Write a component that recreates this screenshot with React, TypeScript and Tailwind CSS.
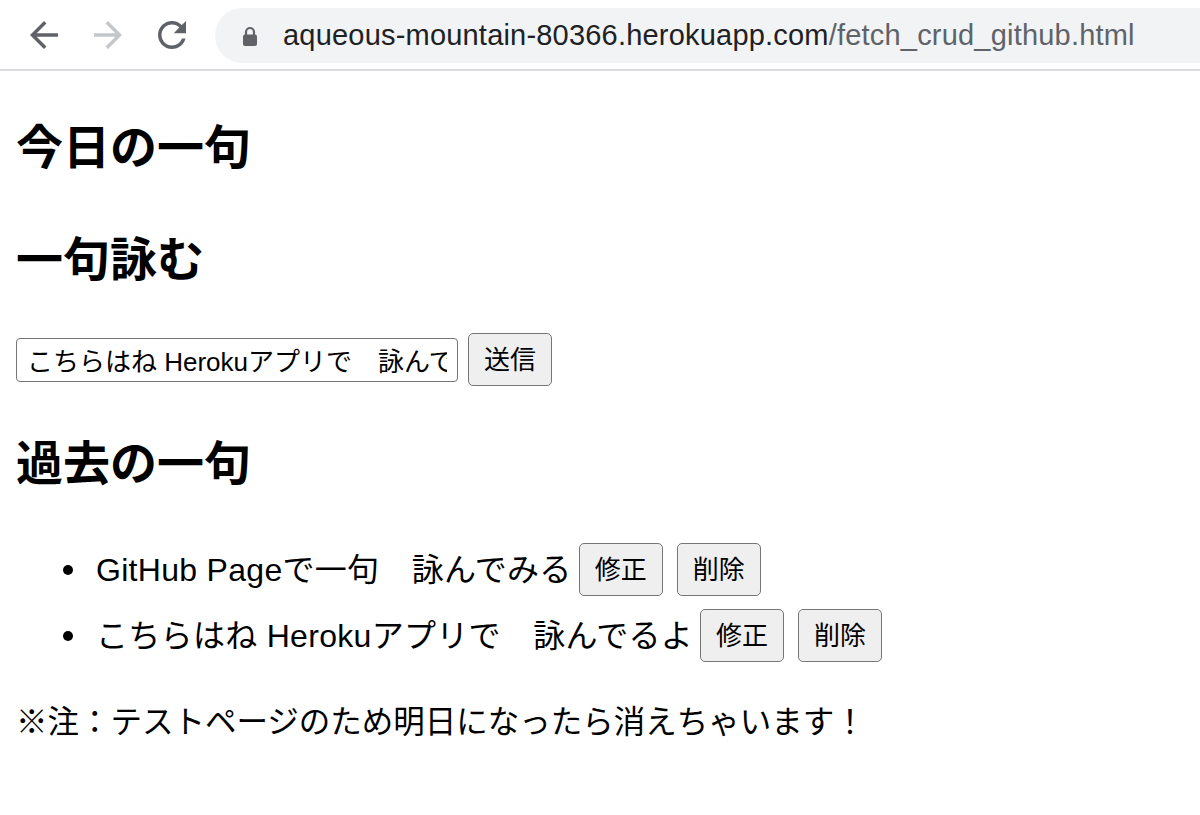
import React from "react";

const jp = "font-['Liberation_Sans','Noto_Sans_CJK_JP',sans-serif]";

function ArrowBack({ color }: { color: string }) {
  return (
    <svg width="42" height="42" viewBox="0 0 24 24" fill={color}>
      <path d="M20 11H7.83l5.59-5.59L12 4l-8 8 8 8 1.41-1.41L7.83 13H20v-2z" />
    </svg>
  );
}

function ArrowForward({ color }: { color: string }) {
  return (
    <svg width="42" height="42" viewBox="0 0 24 24" fill={color}>
      <path d="M4 11h12.17l-5.59-5.59L12 4l8 8-8 8-1.41-1.41L16.17 13H4v-2z" />
    </svg>
  );
}

function Reload() {
  return (
    <svg width="42" height="42" viewBox="0 0 24 24" fill="#5f6368">
      <path d="M17.65 6.35C16.2 4.9 14.21 4 12 4c-4.42 0-7.99 3.58-7.99 8s3.57 8 7.99 8c3.730 0 6.84-2.55 7.73-6h-2.08c-.82 2.33-3.04 4-5.65 4-3.31 0-6-2.69-6-6s2.69-6 6-6c1.66 0 3.14.69 4.22 1.78L13 11h7V4l-2.35 2.35z" />
    </svg>
  );
}

function Lock() {
  return (
    <svg width="16" height="20" viewBox="0 0 16 20">
      <path d="M4 9V6a4 4 0 0 1 8 0v3" fill="none" stroke="#5f6368" strokeWidth="2.2" />
      <rect x="1" y="8.5" width="14" height="11.5" rx="2" fill="#5f6368" />
    </svg>
  );
}

function Btn({ label, className = "" }: { label: string; className?: string }) {
  return (
    <button
      className={`h-[53px] px-[15px] bg-[#efefef] border-[1.5px] border-[#767676] rounded-[5px] text-[26px] text-black leading-none ${className}`}
    >
      {label}
    </button>
  );
}

const poems = [
  { text: "GitHub Pageで一句　詠んでみる" },
  { text: "こちらはね Herokuアプリで　詠んでるよ" },
];

export default function App() {
  return (
    <div className={`w-[1200px] h-[815px] overflow-hidden bg-white text-black ${jp}`}>
      {/* browser bar */}
      <div className="flex items-center h-[71px] pl-[23px] gap-[22px] border-b-2 border-[#dadce0]">
        <ArrowBack color="#5f6368" />
        <ArrowForward color="#c4c7ca" />
        <Reload />
        <div className="flex-1 -mr-[60px] h-[55px] mt-[2px] rounded-full bg-[#f1f3f4] flex items-center pl-[27px]">
          <Lock />
          <span className="ml-[25px] text-[29px] text-[#202124] tracking-[0.2px]">
            aqueous-mountain-80366.herokuapp.com
            <span className="text-[#5f6368]">/fetch_crud_github.html</span>
          </span>
        </div>
      </div>

      <div className="pl-[16px]">
        <h2 className="mt-[50px] text-[47px] font-bold leading-[54px]">今日の一句</h2>
        <h2 className="mt-[58px] text-[47px] font-bold leading-[54px]">一句詠む</h2>

        <div className="mt-[46px] flex items-center gap-[10px]">
          <input
            defaultValue="こちらはね Herokuアプリで　詠んでるよ"
            className="w-[442px] h-[44px] border-[1.5px] border-[#767676] rounded-[4px] px-[10px] text-[26px] outline-none"
          />
          <Btn label="送信" />
        </div>

        <h2 className="mt-[51px] text-[47px] font-bold leading-[54px]">過去の一句</h2>

        <ul className="mt-[52px] flex flex-col gap-[13px]">
          {poems.map((p) => (
            <li key={p.text} className="flex items-center h-[53px] text-[32px] tracking-[0.3px]">
              <span className="w-[10px] h-[10px] rounded-full bg-black ml-[47px] mr-[23px]" />
              <span>{p.text}</span>
              <Btn label="修正" className="ml-[7px] tracking-normal" />
              <Btn label="削除" className="ml-[14px] tracking-normal" />
            </li>
          ))}
        </ul>

        <p className="mt-[40px] text-[31.5px] leading-[40px]">
          ※注：テストページのため明日になったら消えちゃいます！
        </p>
      </div>
    </div>
  );
}
